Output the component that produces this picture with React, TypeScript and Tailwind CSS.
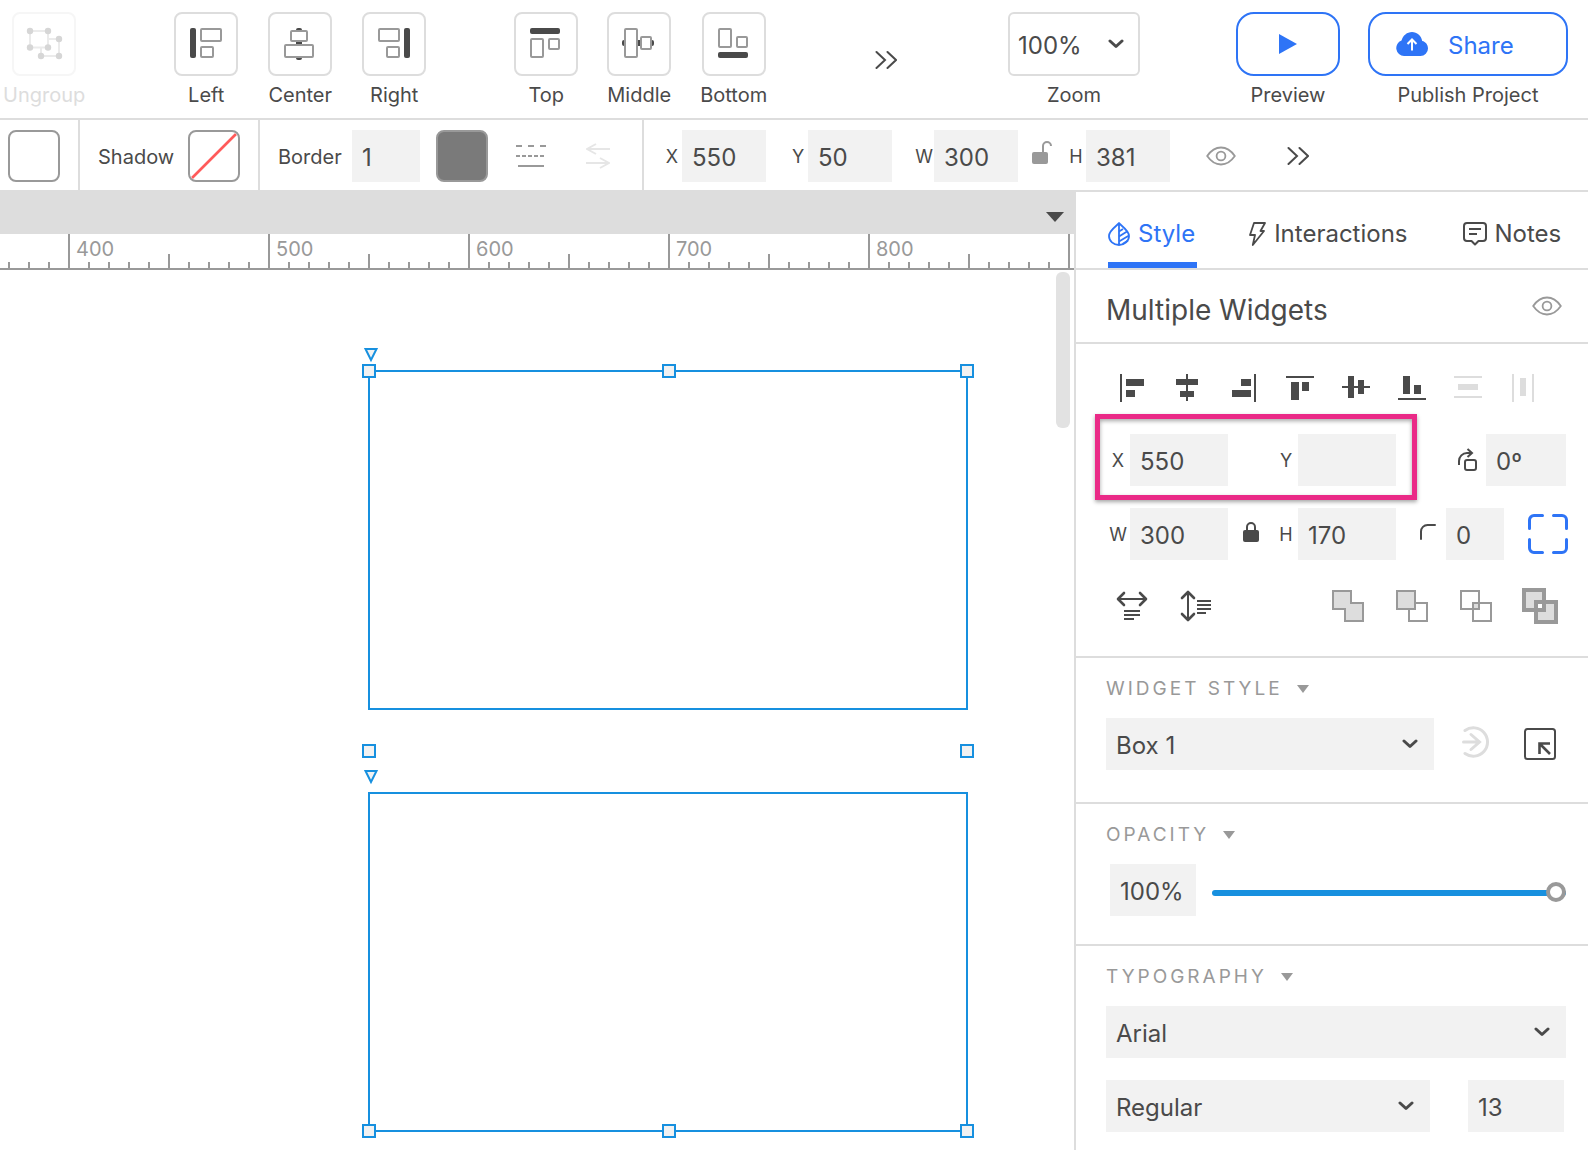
import { ReactNode } from 'react';

const BLUE = '#2e74f6';
const CANVAS_BLUE = '#1790df';
const DARK = '#4a4a4a';
const MID = '#999999';
const LIGHT = '#dddddd';

interface BoxProps {
    x: number;
    y: number;
    w: number;
    h: number;
    fill?: string;
}

// 2px outlined box, x/y/w/h are the outer edges
function Outline({ x, y, w, h, fill = 'white' }: BoxProps) {
    return <rect x={x + 1} y={y + 1} width={w - 2} height={h - 2} rx="1" fill={fill} stroke={MID} strokeWidth="2" />;
}

function Bar({ x, y, w, h, fill = DARK }: BoxProps) {
    return <rect x={x} y={y} width={w} height={h} fill={fill} />;
}

function Pill({ x, y, w, h }: BoxProps) {
    return <rect x={x} y={y} width={w} height={h} rx="2" fill={DARK} />;
}

function Tool({ label, disabled, children }: { label: string; disabled?: boolean; children: ReactNode }) {
    return (
        <button type="button" disabled={disabled} className="group flex flex-col items-center text-[#4a4a4a] disabled:text-[#dddddd]">
            <span className="block size-16 rounded-lg border-2 border-[#dddddd] group-disabled:border-[#f6f6f6]">
                <svg viewBox="2 2 60 60" className="size-[60px]">
                    {children}
                </svg>
            </span>
            <span className="mt-[7px] text-[20px] leading-6">{label}</span>
        </button>
    );
}

function Chevron() {
    return (
        <svg viewBox="0 0 16 10" className="pointer-events-none absolute top-1/2 right-4 h-[10px] w-4 -translate-y-1/2">
            <path d="M2 2l6 5.5L14 2" fill="none" stroke={DARK} strokeWidth="3" strokeLinecap="round" strokeLinejoin="round" />
        </svg>
    );
}

function MoreButton() {
    return (
        <button type="button" aria-label="More">
            <svg viewBox="0 0 22 20" className="h-5 w-[22px]" fill="none" stroke={DARK} strokeWidth="2" strokeLinecap="round">
                <path d="M1.5 2l8.5 8-8.5 8M12.5 2l8.5 8-8.5 8" />
            </svg>
        </button>
    );
}

function Eye() {
    return (
        <svg viewBox="0 0 30 20" className="h-5 w-[30px]" fill="none" stroke={MID} strokeWidth="1.8">
            <path d="M1.2 10C5 4.5 9.5 1.5 15 1.5S25 4.5 28.8 10C25 15.5 20.5 18.5 15 18.5S5 15.5 1.2 10z" />
            <circle cx="15" cy="10" r="4.4" />
        </svg>
    );
}

function Caret() {
    return (
        <svg viewBox="0 0 12 8" className="h-2 w-3">
            <path d="M0 0h12L6 8z" fill={MID} />
        </svg>
    );
}

const inputClass = 'h-[52px] bg-[#f2f2f2] px-[10px] pt-[2px] text-[24px] outline-none';

function Field({ label, value, width, labelWidth = 'w-5' }: { label: string; value: string; width: string; labelWidth?: string }) {
    return (
        <label className="flex items-center">
            <span className={`shrink-0 text-center text-[18px] ${labelWidth}`}>{label}</span>
            <input type="text" defaultValue={value} className={`${inputClass} ${width}`} />
        </label>
    );
}

function Dropdown({ label, options, className }: { label: string; options: string[]; className: string }) {
    return (
        <div className={`relative ${className}`}>
            <select
                aria-label={label}
                className="h-[52px] w-full appearance-none bg-[#f2f2f2] px-[10px] pt-1 text-[24px] outline-none"
            >
                {options.map((o) => (
                    <option key={o}>{o}</option>
                ))}
            </select>
            <Chevron />
        </div>
    );
}

function TopBar() {
    return (
        <header className="flex h-[120px] items-start border-b-2 border-[#dddddd] pt-3 pr-5 pl-[3px]">
            <Tool label="Ungroup" disabled>
                <path d="M18 19h18v16.5H18zM36 27h11v17H29v-8.5" fill="none" stroke="#ebebeb" strokeWidth="2" />
                {[[18, 19], [36, 19], [18, 35.5], [36, 35.5], [47, 27], [29, 44], [47, 44]].map(([x, y]) => (
                    <circle key={`${x}-${y}`} cx={x} cy={y} r="3.2" fill="#d6d6d6" />
                ))}
            </Tool>
            <div className="ml-[89px] flex gap-[30px]">
                <Tool label="Left">
                    <Pill x={16} y={16} w={6} h={30} />
                    <Outline x={26} y={16} w={22} h={14} />
                    <Outline x={26} y={34} w={14} h={12} />
                </Tool>
                <Tool label="Center">
                    <Pill x={28} y={16} w={6} h={32} />
                    <Outline x={22} y={18} w={18} h={12} />
                    <Outline x={16} y={32} w={30} h={14} />
                </Tool>
                <Tool label="Right">
                    <Outline x={16} y={16} w={22} h={14} />
                    <Outline x={24} y={34} w={14} h={12} />
                    <Pill x={42} y={16} w={6} h={30} />
                </Tool>
            </div>
            <div className="ml-[88px] flex gap-[29px]">
                <Tool label="Top">
                    <Pill x={16} y={16} w={30} h={6} />
                    <Outline x={16} y={26} w={14} h={20} />
                    <Outline x={34} y={26} w={12} h={12} />
                </Tool>
                <Tool label="Middle">
                    <Pill x={15} y={28} w={32} h={6} />
                    <Outline x={17} y={16} w={14} h={30} />
                    <Outline x={33} y={24} w={12} h={14} />
                </Tool>
                <Tool label="Bottom">
                    <Outline x={16} y={16} w={14} h={20} />
                    <Outline x={34} y={24} w={12} h={12} />
                    <Pill x={16} y={40} w={30} h={6} />
                </Tool>
            </div>
            <div className="flex grow justify-center pt-[38px] pr-1">
                <MoreButton />
            </div>
            <div className="flex w-[132px] flex-col items-center text-[#4a4a4a]">
                <div className="relative w-full">
                    <select
                        id="zoom"
                        className="h-16 w-full appearance-none rounded-md border-2 border-[#dddddd] px-2 pt-1 text-[24px] outline-none"
                    >
                        <option>100%</option>
                    </select>
                    <Chevron />
                </div>
                <label htmlFor="zoom" className="mt-[7px] text-[20px] leading-6">
                    Zoom
                </label>
            </div>
            <button type="button" className="ml-24 flex flex-col items-center text-[#4a4a4a]">
                <span className="flex h-16 w-[104px] items-center justify-center rounded-[18px] border-2 border-[#2e74f6]">
                    <svg viewBox="0 0 18 20" className="h-5 w-[18px]">
                        <path d="M0 0l18 10L0 20z" fill={BLUE} />
                    </svg>
                </span>
                <span className="mt-[7px] text-[20px] leading-6">Preview</span>
            </button>
            <button type="button" className="ml-7 flex flex-col items-center text-[#4a4a4a]">
                <span className="flex h-16 w-[200px] items-center gap-5 rounded-[18px] border-2 border-[#2e74f6] pl-[26px] text-[24px] text-[#2e74f6]">
                    <svg viewBox="0 0 32 24" className="h-6 w-8">
                        <path
                            d="M8 24a8 8 0 0 1-2.5-15.5C7 3.5 11 0 16 0s9.2 3.5 10.2 9C29.6 9.6 32 12.8 32 16.5A7.5 7.5 0 0 1 24.500 24z"
                            fill={BLUE}
                        />
                        <path d="M16 18.500V8M11.500 12L16 7.500l4.500 4.500" fill="none" stroke="white" strokeWidth="2" />
                    </svg>
                    <span className="pt-1">Share</span>
                </span>
                <span className="mt-[7px] text-[20px] leading-6">Publish Project</span>
            </button>
        </header>
    );
}

function PropertyBar() {
    return (
        <div className="flex h-[70px] text-[#4a4a4a]">
            <div className="flex w-20 items-center border-r-2 border-[#dddddd] pt-[2px] pl-2">
                <button type="button" aria-label="Fill" className="size-[52px] rounded-lg border-2 border-[#999999]" />
            </div>
            <div className="flex w-[180px] items-center gap-[14px] border-r-2 border-[#dddddd] pt-[2px] pl-[18px] text-[20px]">
                <span className="pt-[2px]">Shadow</span>
                <button type="button" aria-label="Shadow" className="size-[52px] overflow-hidden rounded-lg border-2 border-[#999999]">
                    <svg viewBox="0 0 48 48" className="size-12">
                        <path d="M2 46L46 2" stroke="#ff5a5a" strokeWidth="2.6" />
                    </svg>
                </button>
            </div>
            <div className="flex w-[384px] items-center border-r-2 border-[#dddddd] pt-[2px] pl-[18px]">
                <label htmlFor="border" className="w-[74px] pt-[2px] text-[20px]">
                    Border
                </label>
                <input id="border" type="text" defaultValue="1" className={`w-[68px] ${inputClass}`} />
                <button
                    type="button"
                    aria-label="Border color"
                    className="ml-4 size-[52px] rounded-lg border-2 border-[#999999] bg-[#7a7a7a]"
                />
                <button type="button" aria-label="Border pattern" className="ml-7">
                    <svg viewBox="0 0 30 24" className="h-6 w-[30px]" stroke={MID} strokeWidth="2">
                        <path d="M0 2h30" strokeDasharray="6 6" />
                        <path d="M0 12h28" strokeDasharray="4 2" />
                        <path d="M2 22h26" />
                    </svg>
                </button>
                <button type="button" aria-label="Arrow style" disabled className="ml-10">
                    <svg viewBox="0 0 24 26" className="h-[26px] w-6" fill="none" stroke="#e6e6e6" strokeWidth="2">
                        <path d="M24 6H1M10 1L1 6l9 5M0 20h23M14 15l9 5-9 5" />
                    </svg>
                </button>
            </div>
            <div className="flex items-center pt-[2px] pl-[18px]">
                <Field label="X" value="550" width="w-[84px]" />
                <div className="w-[22px]" />
                <Field label="Y" value="50" width="w-[84px]" />
                <div className="w-[22px]" />
                <Field label="W" value="300" width="w-[84px]" />
                <button type="button" aria-label="Lock ratio" className="mx-[14px]">
                    <svg viewBox="0 0 20 24" className="mb-2 h-6 w-5">
                        <rect x="0" y="12" width="16" height="12" rx="2" fill={MID} />
                        <path d="M11 12V6a4 4 0 0 1 8 0" fill="none" stroke={MID} strokeWidth="2" />
                    </svg>
                </button>
                <Field label="H" value="381" width="w-[84px]" />
                <button type="button" aria-label="Hide" className="ml-9">
                    <Eye />
                </button>
                <div className="ml-[51px] flex">
                    <MoreButton />
                </div>
            </div>
        </div>
    );
}

function tickHeight(i: number) {
    if (i % 10 === 3) return 'h-[34px]';
    return i % 10 === 8 ? 'h-[14px]' : 'h-[6px]';
}

function Ruler() {
    return (
        <div className="flex h-9 items-end overflow-hidden border-b-2 border-[#999999] pl-2">
            {Array.from({ length: 60 }, (_, i) => (
                <div key={i} className={`w-5 shrink-0 border-l-2 border-[#999999] ${tickHeight(i)}`}>
                    {i % 10 === 3 && i < 50 && (
                        <span className="block pt-[3px] pl-[6px] text-[20px] leading-6 text-[#999999]">{400 + (i - 3) * 10}</span>
                    )}
                </div>
            ))}
        </div>
    );
}

function Handle({ place }: { place: string }) {
    return <div className={`absolute size-[14px] border-2 border-[#1790df] bg-[#f2f2f2] ${place}`} />;
}

function Widget({ place }: { place: string }) {
    return (
        <div className={`absolute left-[368px] h-[340px] w-[600px] border-2 border-[#1790df] ${place}`}>
            <svg viewBox="0 0 16 16" className="absolute -top-[25px] -left-[7px] size-4">
                <path d="M2.5 2h11L8 13z" fill="#f2f2f2" stroke={CANVAS_BLUE} strokeWidth="2" />
            </svg>
        </div>
    );
}

function Canvas() {
    return (
        <main className="flex min-w-0 flex-1 flex-col overflow-hidden">
            <div className="flex h-11 items-center justify-end bg-[#dddddd] pt-[10px] pr-[10px]">
                <svg viewBox="0 0 18 10" className="h-[10px] w-[18px]">
                    <path d="M0 0h18L9 10z" fill={DARK} />
                </svg>
            </div>
            <Ruler />
            <div className="relative flex-1">
                <Widget place="top-[100px]" />
                <Widget place="top-[522px]" />
                <Handle place="left-[362px] top-[94px]" />
                <Handle place="left-[662px] top-[94px]" />
                <Handle place="left-[960px] top-[94px]" />
                <Handle place="left-[362px] top-[474px]" />
                <Handle place="left-[960px] top-[474px]" />
                <Handle place="left-[362px] top-[854px]" />
                <Handle place="left-[662px] top-[854px]" />
                <Handle place="left-[960px] top-[854px]" />
                <div className="absolute top-[2px] right-1 h-[156px] w-[14px] rounded-md bg-[#e2e2e2]" />
            </div>
        </main>
    );
}

function Tabs() {
    const tab = 'flex h-full items-center gap-2 border-b-6 pt-[14px]';
    return (
        <nav className="flex h-[78px] gap-[51px] border-b-2 border-[#dddddd] pl-8 text-[24px]">
            <button type="button" className={`${tab} border-[#2e74f6] pr-[2px] text-[#2e74f6]`}>
                <svg viewBox="0 0 22 24" className="h-6 w-[22px]" fill="none" stroke={BLUE} strokeWidth="1.8">
                    <path d="M11 1.200C8 4.500 1 8.500 1 14a10 9 0 0 0 20 0C21 8.500 14 4.500 11 1.200zM11 1v22" />
                    <path d="M11 9.500l4-2.500M11 14.500l8-5M11 19.500l10-6M14.500 22l5.500-3.500" />
                </svg>
                Style
            </button>
            <button type="button" className={`${tab} border-transparent pr-1`}>
                <svg viewBox="0 0 18 24" className="h-6 w-[18px]" fill="none" stroke={DARK} strokeWidth="1.8" strokeLinejoin="round">
                    <path d="M6 1h11l-4.500 8H16L4.800 23 7 13H2z" />
                </svg>
                Interactions
            </button>
            <button type="button" className={`${tab} border-transparent`}>
                <svg viewBox="0 0 24 24" className="size-6" fill="none" stroke={DARK} strokeWidth="2" strokeLinejoin="round">
                    <path d="M4 1h16a3 3 0 0 1 3 3v12a3 3 0 0 1-3 3h-4.500L12 22.500 8.500 19H4a3 3 0 0 1-3-3V4a3 3 0 0 1 3-3z" />
                    <path d="M6 7h12M6 12h8" />
                </svg>
                Notes
            </button>
        </nav>
    );
}

function AlignButton({ label, children }: { label: string; children: ReactNode }) {
    return (
        <button type="button" aria-label={label}>
            <svg viewBox="0 0 28 28" className="size-7">
                {children}
            </svg>
        </button>
    );
}

function AlignRow() {
    return (
        <div className="flex gap-7 pl-[10px]">
            <AlignButton label="Align left">
                <Bar x={2} y={0} w={2} h={28} />
                <Bar x={8} y={5} w={18} h={7} />
                <Bar x={8} y={16} w={9} h={7} />
            </AlignButton>
            <AlignButton label="Align center">
                <Bar x={12} y={0} w={2} h={27} />
                <Bar x={2} y={5} w={22} h={6} />
                <Bar x={6} y={17} w={14} h={6} />
            </AlignButton>
            <AlignButton label="Align right">
                <Bar x={24} y={0} w={2} h={28} />
                <Bar x={11} y={5} w={10} h={7} />
                <Bar x={2} y={16} w={19} h={7} />
            </AlignButton>
            <AlignButton label="Align top">
                <Bar x={0} y={2} w={28} h={2} />
                <Bar x={5} y={8} w={8} h={18} />
                <Bar x={16} y={8} w={7} h={9} />
            </AlignButton>
            <AlignButton label="Align middle">
                <Bar x={0} y={12} w={28} h={2} />
                <Bar x={6} y={2} w={6} h={22} />
                <Bar x={16} y={6} w={6} h={14} />
            </AlignButton>
            <AlignButton label="Align bottom">
                <Bar x={0} y={24} w={28} h={2} />
                <Bar x={5} y={2} w={7} h={18} />
                <Bar x={16} y={11} w={7} h={9} />
            </AlignButton>
            <AlignButton label="Distribute vertically">
                <Bar x={0} y={2} w={28} h={2} fill={LIGHT} />
                <Bar x={4} y={10} w={20} h={6} fill={LIGHT} />
                <Bar x={0} y={22} w={28} h={2} fill={LIGHT} />
            </AlignButton>
            <AlignButton label="Distribute horizontally">
                <Bar x={2} y={0} w={2} h={28} fill={LIGHT} />
                <Bar x={10} y={4} w={6} h={18} fill={LIGHT} />
                <Bar x={22} y={0} w={2} h={28} fill={LIGHT} />
            </AlignButton>
        </div>
    );
}

function BooleanButton({ label, children }: { label: string; children: ReactNode }) {
    return (
        <button type="button" aria-label={label}>
            <svg viewBox="0 0 36 36" className="size-9" fill="none" stroke={MID} strokeWidth="2">
                {children}
            </svg>
        </button>
    );
}

function ShapeRow() {
    return (
        <div className="flex items-center pl-2">
            <button type="button" aria-label="Fit width" className="size-8">
                <svg viewBox="0 0 32 32" className="size-8" fill="none" stroke={DARK} strokeWidth="2">
                    <path d="M2 9h28" />
                    <path d="M8 3L2 9l6 6M24 3l6 6-6 6" strokeWidth="2.6" strokeLinecap="round" strokeLinejoin="round" />
                    <path d="M8 21h16M8 25h16M8 29h10" />
                </svg>
            </button>
            <button type="button" aria-label="Fit height" className="ml-8 size-8">
                <svg viewBox="0 0 32 32" className="size-8" fill="none" stroke={DARK} strokeWidth="2">
                    <path d="M8 2v28" />
                    <path d="M2 8l6-6 6 6M2 24l6 6 6-6" strokeWidth="2.6" strokeLinecap="round" strokeLinejoin="round" />
                    <path d="M17 11h14M17 15h14M17 19h14M17 23h9" />
                </svg>
            </button>
            <div className="mr-[30px] ml-auto flex gap-7">
                <BooleanButton label="Unite">
                    <path d="M3 3h18v12h12v18H15V21H3z" fill={LIGHT} />
                </BooleanButton>
                <BooleanButton label="Subtract">
                    <path d="M15 15h18v18H15z" />
                    <path d="M3 3h18v18H3z" fill={LIGHT} />
                </BooleanButton>
                <BooleanButton label="Intersect">
                    <path d="M15 15h6v6h-6z" fill={LIGHT} />
                    <path d="M3 3h18v18H3zM15 15h18v18H15z" />
                </BooleanButton>
                <BooleanButton label="Exclude">
                    <path d="M2 2h20v20H2zM14 14h20v20H14z" fill={LIGHT} strokeWidth="4" />
                    <path d="M14 14h8v8h-8z" fill="white" strokeWidth="4" />
                </BooleanButton>
            </div>
        </div>
    );
}

function Geometry() {
    return (
        <section className="flex flex-col border-b-2 border-[#dddddd] pt-[30px] pb-8 pl-[30px]">
            <div className="pl-[2px]">
                <AlignRow />
            </div>
            <div className="relative mt-8 flex items-center">
                <Field label="X" value="550" width="w-[98px]" labelWidth="w-6" />
                <div className="w-[46px]" />
                <Field label="Y" value="" width="w-[98px]" labelWidth="w-6" />
                <svg viewBox="0 0 20 24" className="mr-2 ml-[62px] h-6 w-5" fill="none" stroke={DARK} strokeWidth="2">
                    <path d="M1 17v-4a8 8 0 0 1 8-8h4" />
                    <path d="M9.500 1l4.500 4-4.500 4" />
                    <rect x="7" y="12" width="11" height="10" rx="2" />
                </svg>
                <input type="text" aria-label="Rotation" defaultValue="0º" className={`w-20 ${inputClass}`} />
                <div className="pointer-events-none absolute -top-5 -left-[11px] h-[86px] w-[322px] border-5 border-[#ea2a87] shadow-[0_2px_4px_rgba(0,0,0,0.35),inset_0_2px_4px_rgba(0,0,0,0.35)]" />
            </div>
            <div className="mt-[22px] flex items-center">
                <Field label="W" value="300" width="w-[98px]" labelWidth="w-6" />
                <button type="button" aria-label="Unlock ratio" className="mx-[15px]">
                    <svg viewBox="0 0 16 20" className="mb-1 h-5 w-4">
                        <rect y="8" width="16" height="12" rx="2" fill={DARK} />
                        <path d="M4 9V5a4 4 0 0 1 8 0v4" fill="none" stroke={DARK} strokeWidth="2" />
                    </svg>
                </button>
                <Field label="H" value="170" width="w-[98px]" labelWidth="w-6" />
                <svg viewBox="0 0 16 16" className="mr-[10px] mb-1 ml-6 size-4" fill="none" stroke={DARK} strokeWidth="2" strokeLinecap="round">
                    <path d="M1 15V7.500A6.500 6.500 0 0 1 7.500 1H15" />
                </svg>
                <input type="text" aria-label="Corner radius" defaultValue="0" className={`w-[58px] ${inputClass}`} />
                <button type="button" aria-label="Corners" className="ml-6">
                    <svg viewBox="0 0 40 40" className="size-10" fill="none" stroke={BLUE} strokeWidth="3" strokeLinecap="round">
                        <path d="M1.500 14.500V6A4.500 4.500 0 0 1 6 1.500h8.500M25.500 1.500H34A4.500 4.500 0 0 1 38.500 6v8.500M38.500 25.500V34a4.500 4.500 0 0 1-4.500 4.500h-8.500M14.500 38.500H6A4.500 4.500 0 0 1 1.500 34v-8.500" />
                    </svg>
                </button>
            </div>
            <div className="mt-7 pl-[2px]">
                <ShapeRow />
            </div>
        </section>
    );
}

function SectionTitle({ children }: { children: ReactNode }) {
    return (
        <h3 className="mb-[17px]">
            <button type="button" className="flex items-center gap-[14px] text-[19px] leading-6 tracking-[3px] text-[#999999]">
                {children}
                <Caret />
            </button>
        </h3>
    );
}

function Sidebar() {
    return (
        <aside className="w-[514px] shrink-0 border-t-2 border-l-2 border-[#dddddd] text-[#4a4a4a]">
            <Tabs />
            <div className="flex h-[74px] items-center justify-between border-b-2 border-[#dddddd] pr-[26px] pl-[30px]">
                <h2 className="pt-2 text-[28px] leading-8">Multiple Widgets</h2>
                <button type="button" aria-label="Hide widgets">
                    <Eye />
                </button>
            </div>
            <Geometry />
            <section className="border-b-2 border-[#dddddd] pt-[19px] pr-8 pb-8 pl-[30px]">
                <SectionTitle>WIDGET STYLE</SectionTitle>
                <div className="flex items-center">
                    <Dropdown label="Widget style" options={['Box 1']} className="flex-1" />
                    <button type="button" aria-label="Update style" disabled className="mb-1 ml-7">
                        <svg viewBox="0 0 28 32" className="h-8 w-7" fill="none" stroke={LIGHT} strokeWidth="3" strokeLinecap="round">
                            <path d="M3 4.500A14.200 14.200 0 1 1 3 27.500" />
                            <path d="M1.500 16H17M9 8.500l8.500 7.500L9 23.500" />
                        </svg>
                    </button>
                    <button type="button" aria-label="Manage styles" className="ml-[34px]">
                        <svg viewBox="0 0 32 32" className="size-8" fill="none" stroke={DARK} strokeWidth="2">
                            <rect x="1" y="1" width="30" height="30" rx="2.5" />
                            <path d="M15.500 26V15.500H26M16 16l10 10" strokeWidth="2.6" />
                        </svg>
                    </button>
                </div>
            </section>
            <section className="border-b-2 border-[#dddddd] pt-[19px] pr-[22px] pb-7 pl-[30px]">
                <SectionTitle>OPACITY</SectionTitle>
                <div className="flex items-center gap-4 pl-1">
                    <input type="text" aria-label="Opacity value" defaultValue="100%" className={`w-[86px] ${inputClass}`} />
                    <input
                        type="range"
                        aria-label="Opacity"
                        defaultValue={100}
                        className="mt-[6px] h-5 min-w-0 flex-1 appearance-none bg-transparent [&::-webkit-slider-runnable-track]:h-[6px] [&::-webkit-slider-runnable-track]:rounded-full [&::-webkit-slider-runnable-track]:bg-[#1790df] [&::-webkit-slider-thumb]:-mt-2 [&::-webkit-slider-thumb]:size-5 [&::-webkit-slider-thumb]:appearance-none [&::-webkit-slider-thumb]:rounded-full [&::-webkit-slider-thumb]:border-4 [&::-webkit-slider-thumb]:border-[#999999] [&::-webkit-slider-thumb]:bg-white"
                    />
                </div>
            </section>
            <section className="pt-[19px] pr-[22px] pb-[18px] pl-[30px]">
                <SectionTitle>TYPOGRAPHY</SectionTitle>
                <Dropdown label="Font" options={['Arial']} className="w-full" />
                <div className="mt-[22px] flex justify-between pr-[2px]">
                    <Dropdown label="Font weight" options={['Regular']} className="w-[324px]" />
                    <input type="text" aria-label="Font size" defaultValue="13" className={`w-24 ${inputClass}`} />
                </div>
            </section>
        </aside>
    );
}

export default function App() {
    return (
        <div className="flex min-h-screen flex-col bg-white font-['Inter',sans-serif]">
            <TopBar />
            <PropertyBar />
            <div className="flex flex-1">
                <Canvas />
                <Sidebar />
            </div>
        </div>
    );
}
